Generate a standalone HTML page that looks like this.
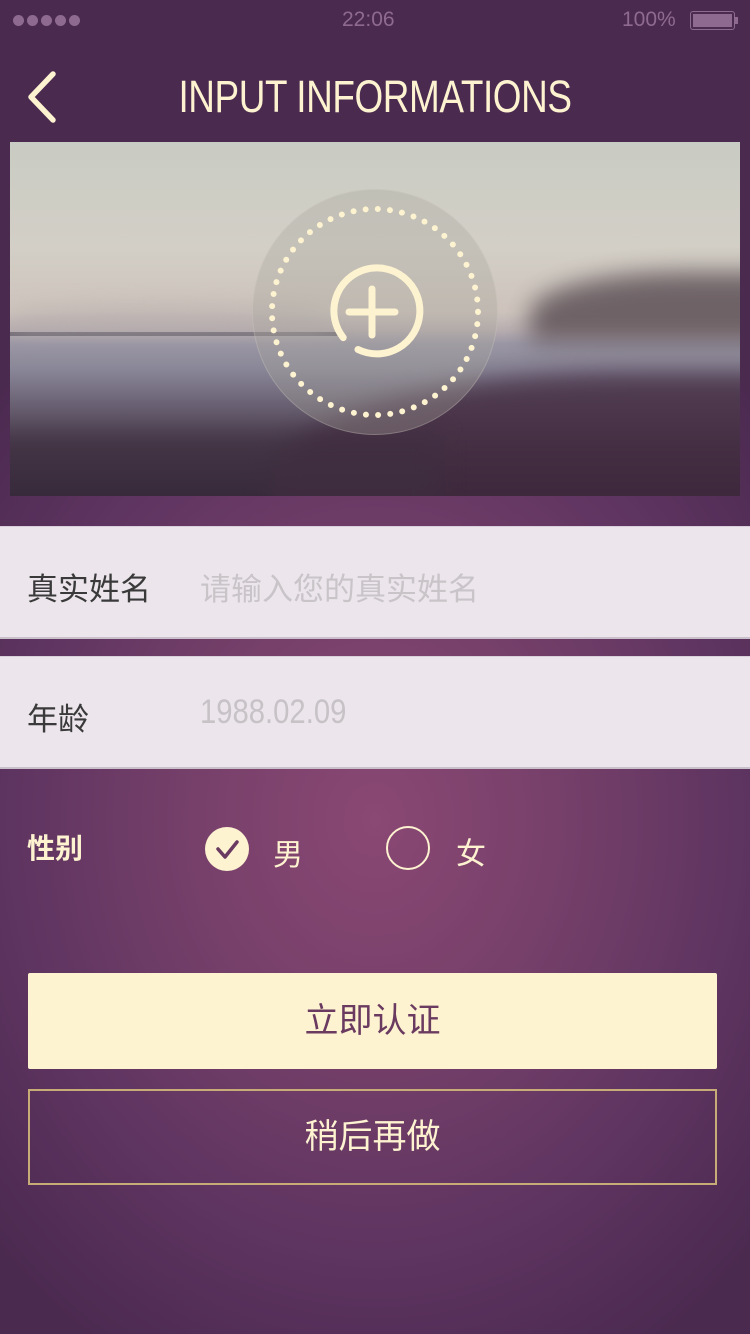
<!DOCTYPE html>
<html><head><meta charset="utf-8"><style>
*{margin:0;padding:0;box-sizing:border-box}
body{width:750px;height:1334px;overflow:hidden;position:relative;font-family:"Liberation Sans","Noto Sans CJK SC",sans-serif;
background:radial-gradient(ellipse 520px 620px at 375px 820px,#8a4874 0%,#76406a 35%,#5e3460 70%,#4b2a50 100%),#4b2a50;}
.abs{position:absolute}
.status{top:8px;font-size:21px;color:#8e6a90}
.photo{left:10px;top:142px;width:730px;height:354px;overflow:hidden;
background:linear-gradient(180deg,#c9ccc4 0%,#d3cfc6 30%,#cdc3bc 48%,#b8aeb0 53%,#9a96a4 57%,#8a8798 64%,#6a6274 74%,#4a3c4c 86%,#2e2232 100%)}
.row{left:0;width:750px;height:113px;background:#ece6ec;border-bottom:2px solid #c9c0cc;border-top:1px solid #d8cfda}
.lbl{font-size:31px;color:#3a3a3a;position:absolute;left:27px;top:37px}
.ph{font-size:31px;color:#c8c4c8;position:absolute;left:200px;top:37px}
.blur{filter:blur(12px)}
</style></head><body>
<div class="abs" style="left:13px;top:15px;display:flex;gap:3px"><i style="width:11px;height:11px;border-radius:50%;background:#8e6a90"></i><i style="width:11px;height:11px;border-radius:50%;background:#8e6a90"></i><i style="width:11px;height:11px;border-radius:50%;background:#8e6a90"></i><i style="width:11px;height:11px;border-radius:50%;background:#8e6a90"></i><i style="width:11px;height:11px;border-radius:50%;background:#8e6a90"></i></div>
<div class="abs status" style="left:342px">22:06</div>
<div class="abs status" style="left:622px">100%</div>
<div class="abs" style="left:690px;top:11px;width:45px;height:19px;border:1.5px solid #8e6a90;border-radius:3px;padding:2px"><div style="width:100%;height:100%;background:#8e6a90"></div></div>
<div class="abs" style="left:735px;top:17px;width:3px;height:7px;background:#8e6a90"></div>
<svg class="abs" style="left:22px;top:68px" width="40" height="58"><path d="M31 6 L9 29 L31 52" fill="none" stroke="#fdf3d0" stroke-width="5.5" stroke-linecap="round" stroke-linejoin="round"/></svg>
<div class="abs" style="left:0;width:750px;top:71px;text-align:center;font-size:45px;color:#fdf3d0;transform:scaleX(.82);letter-spacing:-0.5px">INPUT INFORMATIONS</div>
<div class="abs photo">
<div class="abs" style="left:0;top:190px;width:330px;height:4px;background:#5a5460;opacity:.7"></div>
<div class="abs blur" style="left:0;top:166px;width:320px;height:24px;background:#b0a8aa;border-radius:50% 50% 0 0;opacity:.6"></div>
<div class="abs blur" style="left:520px;top:130px;width:260px;height:70px;background:#5e5258;border-radius:60% 0 0 0;opacity:.85"></div>
<div class="abs blur" style="left:260px;top:230px;width:520px;height:160px;background:#432a40;border-radius:70% 0 0 0;opacity:.75"></div>
<div class="abs blur" style="left:-30px;top:290px;width:460px;height:100px;background:#3e3040;opacity:.6"></div>
</div>
<div class="abs" style="left:252px;top:189px;width:246px;height:246px;border-radius:50%;background:rgba(170,165,158,.35);border:1px solid rgba(220,215,205,.25)"></div>
<svg class="abs" style="left:252px;top:189px" width="246" height="246">
<circle cx="123" cy="123" r="103" fill="none" stroke="#fdf3d0" stroke-width="6" stroke-linecap="round" stroke-dasharray="0 12.2"/>
<path d="M91.2 148.6 A43 43 0 1 1 106 160.5" fill="none" stroke="#fdf3d0" stroke-width="7" stroke-linecap="round"/>
<path d="M120 100 V146 M97 123 H143" stroke="#fdf3d0" stroke-width="7" stroke-linecap="round"/>
</svg>
<div class="abs row" style="top:526px"><span class="lbl">真实姓名</span><span class="ph">请输入您的真实姓名</span></div>
<div class="abs row" style="top:656px"><span class="lbl">年龄</span><span class="ph" style="top:36px;font-size:34px;transform:scaleX(.86);transform-origin:left;color:#c6c2c6">1988.02.09</span></div>
<div class="abs" style="left:27px;top:827px;font-size:28px;color:#fdf3d0;font-weight:bold">性别</div>
<div class="abs" style="left:205px;top:827px;width:44px;height:44px;border-radius:50%;background:#fdf3d0"></div>
<svg class="abs" style="left:205px;top:827px" width="44" height="44"><path d="M13 22 L20 30 L32 15" fill="none" stroke="#6a3a60" stroke-width="3.5" stroke-linecap="round" stroke-linejoin="round"/></svg>
<div class="abs" style="left:273px;top:830px;font-size:30px;color:#fdf3d0">男</div>
<div class="abs" style="left:386px;top:826px;width:44px;height:44px;border-radius:50%;border:2px solid #fdf3d0"></div>
<div class="abs" style="left:456px;top:829px;font-size:30px;color:#fdf3d0">女</div>
<div class="abs" style="left:28px;top:973px;width:689px;height:96px;background:#fdf3d0;border-radius:2px;text-align:center;line-height:96px;font-size:34px;color:#6a3a60">立即认证</div>
<div class="abs" style="left:28px;top:1089px;width:689px;height:96px;border:2px solid #c8ac78;text-align:center;line-height:92px;font-size:34px;color:#fdf3d0">稍后再做</div>
</body></html>
